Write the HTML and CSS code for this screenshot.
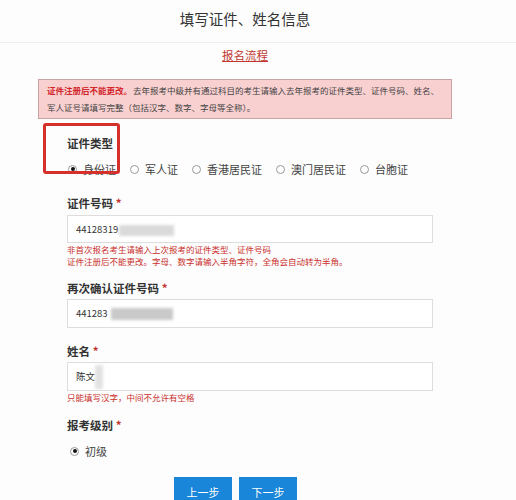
FILE: index.html
```html
<!DOCTYPE html>
<html lang="zh-CN">
<head>
<meta charset="utf-8">
<title>填写证件、姓名信息</title>
<link rel="stylesheet" href="styles.css">
</head>
<body>
<header class="header"><h1 class="title">填写证件、姓名信息</h1></header>
<div class="flow"><a class="flow-link" href="#">报名流程</a></div>
<main class="wrap">
  <div class="alert"><span class="alert-strong">证件注册后不能更改。</span>去年报考中级并有通过科目的考生请输入去年报考的证件类型、证件号码、姓名、军人证号请填写完整（包括汉字、数字、字母等全称）。</div>
  <form class="form">
    <div class="label l-type">证件类型</div>
    <div class="radios">
      <span class="radio"><span class="dot on"></span>身份证</span>
      <span class="radio"><span class="dot"></span>军人证</span>
      <span class="radio"><span class="dot"></span>香港居民证</span>
      <span class="radio"><span class="dot"></span>澳门居民证</span>
      <span class="radio"><span class="dot"></span>台胞证</span>
    </div>
    <div class="label l-id">证件号码 <span class="req">*</span></div>
    <div class="input i1">44128319<span class="blur b1"></span></div>
    <div class="err">非首次报名考生请输入上次报考的证件类型、证件号码<br>证件注册后不能更改。字母、数字请输入半角字符，全角会自动转为半角。</div>
    <div class="label l-re">再次确认证件号码 <span class="req">*</span></div>
    <div class="input i2">441283<span class="blur b2"></span></div>
    <div class="label l-name">姓名 <span class="req">*</span></div>
    <div class="input i3">陈文<span class="blur b3"></span></div>
    <div class="err">只能填写汉字，中间不允许有空格</div>
    <div class="label l-level">报考级别 <span class="req">*</span></div>
    <div class="radios r2">
      <span class="radio"><span class="dot on"></span>初级</span>
    </div>
    <div class="btns">
      <button type="button" class="btn">上一步</button>
      <button type="button" class="btn">下一步</button>
    </div>
  </form>
  <div class="mark"></div>
</main>
</body>
</html>
```
FILE: styles.css
```css
* { box-sizing: border-box; }
html, body { margin: 0; padding: 0; background: #fdfdfd; }
body {
  font-family: "Noto Sans CJK SC", "Microsoft YaHei", sans-serif;
  color: #333;
  width: 516px;
  height: 500px;
  overflow: hidden;
}
.header {
  height: 43px;
  border-bottom: 1px solid #eeeeee;
  width: 516px;
}
.title {
  margin: 0;
  width: 490px;
  font-size: 14.5px;
  font-weight: 400;
  line-height: 38px;
  text-align: center;
  color: #333;
}
.flow {
  width: 490px;
  text-align: center;
  line-height: 20px;
  height: 20px;
}
.flow-link {
  font-size: 11.5px;
  color: #c2352f;
  text-decoration: underline;
}
.wrap {
  position: relative;
  margin: 16px 0 0 38px;
  width: 414px;
}
.alert {
  background: #f9d0d0;
  border: 1px solid #c9a3a3;
  padding: 2px 7px 2px 8px;
  font-size: 8.5px;
  line-height: 17px;
  color: #444;
}
.alert-strong { color: #d2262b; font-weight: 700; margin-right: 1px; }
.form { padding-left: 29px; }
.label {
  font-size: 11.5px;
  font-weight: 700;
  line-height: 20px;
  color: #333;
}
.req { color: #c2352f; }
.l-type { margin-top: 14px; }
.l-id { margin-top: 14px; margin-bottom: 2px; }
.l-re { margin-top: 11px; margin-bottom: 1px; }
.l-name { margin-top: 13px; margin-bottom: 1px; }
.l-level { margin-top: 12px; }
.radios {
  display: flex;
  margin-top: 6px;
  line-height: 20px;
  font-size: 11px;
  color: #444;
  padding-left: 1px;
}
.r2 { padding-left: 3px; }
.radio {
  display: flex;
  align-items: center;
  margin-right: 14px;
}
.dot {
  width: 9px;
  height: 9px;
  border: 1px solid #999;
  border-radius: 50%;
  margin-right: 6px;
  display: inline-block;
  position: relative;
  background: #fff;
}
.dot.on::after {
  content: "";
  position: absolute;
  left: 1.5px;
  top: 1.5px;
  width: 4px;
  height: 4px;
  border-radius: 50%;
  background: #111;
}
.input {
  position: relative;
  width: 366px;
  height: 29px;
  border: 1px solid #ddd;
  background: #fff;
  font-size: 9.5px;
  line-height: 27px;
  padding-left: 8px;
  color: #333;
}
.i1 { height: 28px; line-height: 26px; }
.blur {
  display: inline-block;
  vertical-align: middle;
  filter: blur(1.5px);
}
.b1 { width: 55px; height: 11px; background: #dadada; margin-left: 1px; }
.b2 { width: 62px; height: 12px; background: #c9c9c9; margin-left: 3px; }
.b3 { width: 8px; height: 24px; background: #e2e2e2; }
.err {
  font-size: 8.5px;
  line-height: 12px;
  color: #c9302c;
}
.btns {
  display: flex;
  gap: 7px;
  margin-top: 16px;
  padding-left: 107px;
}
.btn {
  width: 58px;
  height: 30px;
  border: 0;
  background: #1a86d9;
  color: #fff;
  font-family: inherit;
  font-size: 11px;
  padding: 0;
}
.mark {
  position: absolute;
  left: 5px;
  top: 44px;
  width: 77px;
  height: 51px;
  border: 3px solid #d6302c;
  border-radius: 3px;
}
```
